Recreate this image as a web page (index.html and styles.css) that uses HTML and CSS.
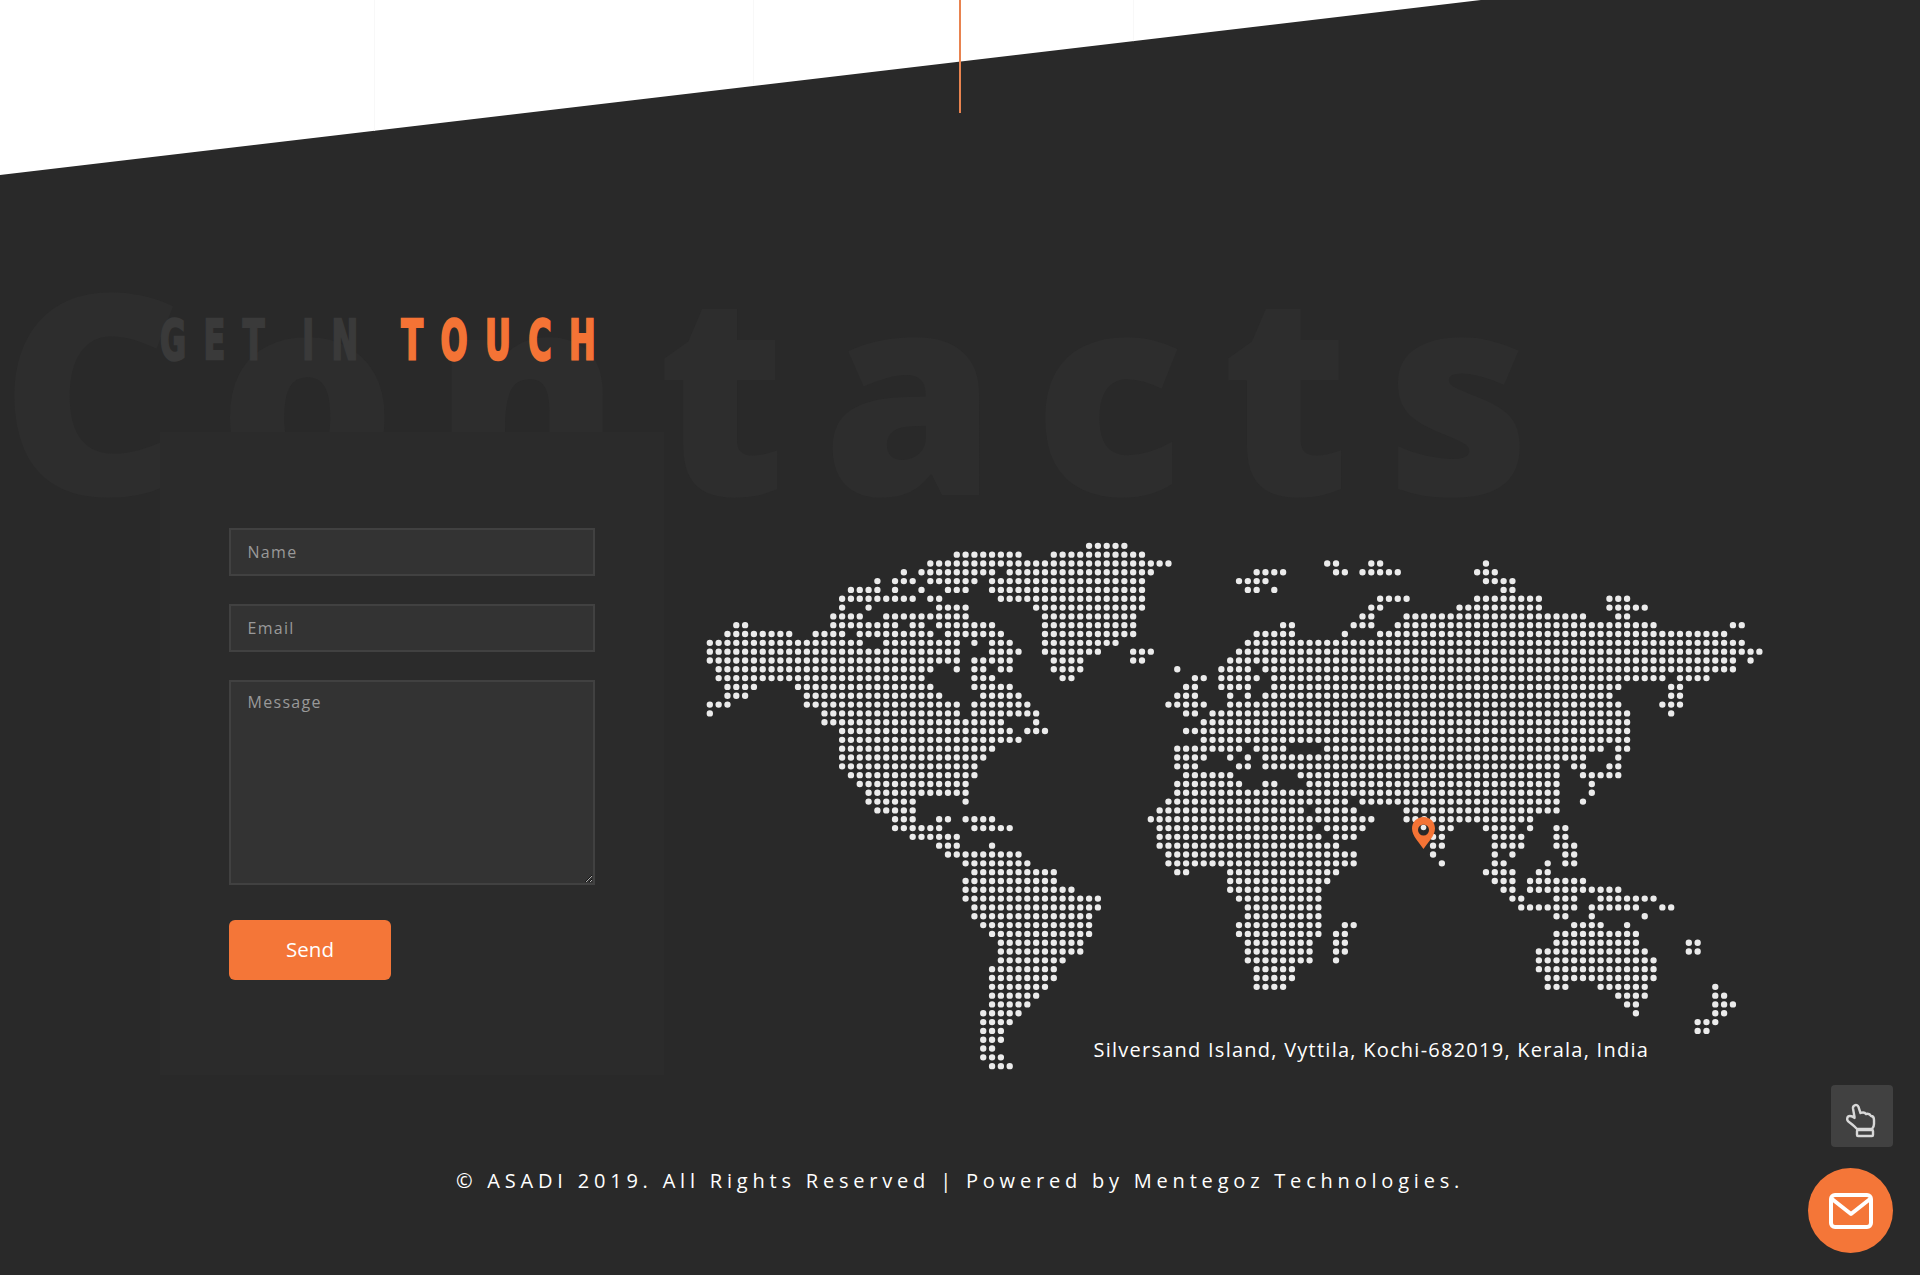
FILE: index.html
```html
<!DOCTYPE html>
<html lang="en">
<head>
<meta charset="utf-8">
<title>Contacts</title>
<link rel="stylesheet" href="styles.css">
</head>
<body>
<div class="page">
  <header class="hero">
    <div class="guides"><span></span><span></span><span></span><span></span></div>
  </header>
  <span class="drop-line"></span>
  <section class="contact">
    <span class="ghost-word">Contacts</span>
    <h2 class="title"><span class="title-inner">GET IN <em>TOUCH</em></span></h2>
    <div class="contact-row">
      <form class="form-card">
        <input class="field" type="text" placeholder="Name">
        <input class="field" type="text" placeholder="Email">
        <textarea class="field field-area" placeholder="Message"></textarea>
        <button class="send" type="button">Send</button>
      </form>
      <div class="map">
        <svg class="map-svg" viewBox="-1 -1 122 62" width="1076.04" height="546.84" aria-hidden="true">
          <path class="dots" d="M43 0h4.5
M28 1h7.5M39 1h10.5
M25 2h27.5M70 2h1.5M75 2h1.5M88 2h.5
M22 3h.5M24 3h8.5M34 3h16.5M62 3h3.5M71 3h1.5M74 3h4.5M87 3h2.5
M19 4h.5M21 4h2.5M25 4h5.5M32 4h17.5M60 4h3.5M88 4h3.5
M16 5h3.5M21 5h.5M24 5h.5M27 5h2.5M32 5h17.5M61 5h1.5M64 5h.5M90 5h1.5
M15 6h8.5M25 6h1.5M33 6h16.5M76 6h3.5M87 6h7.5M102 6h2.5
M15 7h.5M18 7h.5M26 7h3.5M37 7h12.5M75 7h1.5M85 7h9.5M102 7h4.5
M14 8h3.5M20 8h9.5M38 8h10.5M74 8h1.5M79 8h20.5M103 8h1.5
M3 9h1.5M14 9h7.5M23 9h1.5M26 9h6.5M38 9h10.5M65 9h1.5M73 9h2.5M78 9h29.5M116 9h1.5
M2 10h7.5M12 10h3.5M17 10h8.5M27 10h6.5M38 10h10.5M62 10h4.5M72 10h.5M76 10h39.5
M0 11h17.5M20 11h8.5M30 11h.5M32 11h2.5M38 11h8.5M61 11h56.5
M0 12h28.5M32 12h3.5M38 12h6.5M48 12h2.5M60 12h59.5
M0 13h28.5M30 13h4.5M39 13h3.5M48 13h1.5M59 13h57.5M118 13h.5
M1 14h24.5M28 14h.5M30 14h1.5M33 14h1.5M39 14h3.5M53 14h.5M58 14h3.5M63 14h53.5
M1 15h23.5M30 15h2.5M40 15h1.5M55 15h1.5M58 15h4.5M64 15h44.5M110 15h3.5
M2 16h3.5M10 16h15.5M30 16h4.5M54 16h1.5M58 16h3.5M64 16h39.5M109 16h1.5
M2 17h2.5M11 17h15.5M31 17h4.5M53 17h2.5M59 17h.5M61 17h.5M63 17h39.5M109 17h1.5
M0 18h2.5M11 18h17.5M30 18h6.5M52 18h4.5M59 18h44.5M108 18h2.5
M0 19h.5M13 19h15.5M30 19h7.5M54 19h1.5M57 19h47.5M109 19h.5
M13 20h20.5M37 20h.5M56 20h48.5
M15 21h19.5M36 21h2.5M54 21h50.5
M15 22h20.5M56 22h48.5
M15 23h17.5M53 23h7.5M62 23h3.5M70 23h31.5M103 23h1.5
M15 24h16.5M53 24h3.5M59 24h.5M61 24h.5M63 24h36.5M103 24h.5
M15 25h15.5M53 25h2.5M60 25h1.5M63 25h33.5M98 25h1.5M102 25h1.5
M16 26h14.5M54 26h5.5M67 26h29.5M99 26h4.5
M17 27h12.5M53 27h7.5M63 27h1.5M68 27h28.5M100 27h.5
M18 28h11.5M53 28h43.5M100 28h.5
M18 29h5.5M29 29h.5M52 29h20.5M74 29h22.5M99 29h.5
M19 30h4.5M51 30h16.5M69 30h4.5M79 30h17.5
M21 31h2.5M26 31h1.5M29 31h3.5M50 31h25.5M79 31h14.5
M21 32h5.5M30 32h4.5M51 32h17.5M70 32h4.5M83 32h1.5M88 32h3.5M93 32h.5M96 32h1.5
M23 33h5.5M51 33h18.5M71 33h2.5M82 33h1.5M89 33h3.5M96 33h1.5
M26 34h2.5M32 34h.5M51 34h20.5M82 34h1.5M89 34h3.5M96 34h2.5
M27 35h8.5M52 35h21.5M82 35h.5M89 35h.5M91 35h.5M97 35h1.5
M29 36h7.5M52 36h21.5M83 36h.5M89 36h1.5M95 36h.5M97 36h1.5
M30 37h9.5M53 37h1.5M59 37h12.5M88 37h3.5M94 37h1.5
M29 38h10.5M59 38h11.5M89 38h2.5M93 38h6.5
M29 39h12.5M59 39h10.5M90 39h1.5M93 39h10.5
M29 40h15.5M60 40h9.5M91 40h1.5M96 40h2.5M101 40h6.5
M30 41h14.5M61 41h8.5M92 41h6.5M100 41h5.5M108 41h1.5
M30 42h13.5M61 42h8.5M96 42h1.5M100 42h.5M106 42h.5
M31 43h12.5M60 43h9.5M72 43h1.5M98 43h3.5M104 43h.5
M32 44h11.5M60 44h9.5M71 44h1.5M96 44h9.5
M33 45h9.5M61 45h7.5M71 45h1.5M96 45h9.5M111 45h1.5
M33 46h9.5M61 46h7.5M71 46h1.5M94 46h12.5M111 46h1.5
M33 47h7.5M61 47h7.5M71 47h.5M94 47h13.5
M32 48h7.5M62 48h4.5M94 48h13.5
M32 49h7.5M62 49h4.5M95 49h12.5
M32 50h6.5M62 50h3.5M95 50h2.5M101 50h5.5M114 50h.5
M32 51h5.5M103 51h3.5M114 51h1.5
M32 52h4.5M104 52h1.5M114 52h2.5
M31 53h4.5M105 53h.5M114 53h1.5
M31 54h3.5M112 54h2.5
M31 55h2.5M112 55h1.5
M31 56h2.5
M31 57h1.5
M31 58h2.5
M32 59h2.5"/>
        </svg>
        <svg class="pin" viewBox="0 0 23 32" width="23" height="32" aria-hidden="true">
          <path class="pin-body" d="M11.5 0C5 0 0 5 0 11.500 0 19 7.500 26 11.500 32c4-6 11.500-13 11.500-20.500C23 5 18 0 11.500 0z"/>
          <circle class="pin-hole" cx="11.5" cy="13" r="5.500"/>
          <circle class="pin-dot" cx="11.5" cy="10.500" r="2.800"/>
        </svg>
        <p class="address">Silversand Island, Vyttila, Kochi-682019, Kerala, India</p>
      </div>
    </div>
  </section>
  <footer class="footer">© ASADI 2019. All Rights Reserved | Powered by Mentegoz Technologies.</footer>
  <div class="floats">
    <a class="float-square" href="#" aria-label="Pointer">
      <svg viewBox="0 0 31 35" width="31" height="35" aria-hidden="true">
        <path class="hand" d="M9.500 14 8 5.500C7.500 2 12.500.5 13.500 4l2 6c2.500-1 4.500-.5 5.500 1 2-.5 4 0 5 2 2 0 3 2 3 4v4c0 2-1 4-2 5H12c-2-2-5-5-8-7-3-2-2-6 1-6 2 0 3.500 1 4.500 2z"/>
        <rect class="hand" x="12" y="27" width="16" height="6" rx="1"/>
      </svg>
    </a>
    <a class="float-mail" href="#" aria-label="Mail">
      <svg viewBox="0 0 44 36" width="44" height="36" aria-hidden="true">
        <rect class="mail" x="2" y="2" width="40" height="32" rx="4"/>
        <path class="mail" d="M3 6l19 15L41 6"/>
      </svg>
    </a>
  </div>
</div>
</body>
</html>
```
FILE: styles.css
```css
* { box-sizing: border-box; }
html, body { margin: 0; padding: 0; }
body { font-family: "Open Sans", sans-serif; background: #292929; color: #fff; }

.page { position: relative; height: 1275px; overflow: hidden; background: #292929; }

.hero {
  height: 175px;
  background: #fff;
  clip-path: polygon(0 0, 1481px 0, 0 100%);
}
.guides { display: grid; grid-template-columns: 375px 379px 380px 1fr; height: 100%; }
.guides span { border-right: 1px solid #f8f8f8; }
.guides span:last-child { border-right: 0; }

.drop-line { position: absolute; left: 959px; top: 0; width: 2px; height: 113px; background: #e8834f; }

.contact { position: relative; }
.ghost-word {
  position: absolute;
  left: 0;
  top: 32px;
  font-size: 280px;
  line-height: 360px;
  font-weight: 800;
  letter-spacing: 36.5px;
  color: #2d2d2d;
  white-space: nowrap;
}
.title {
  position: relative;
  margin: 0;
  padding: 131px 0 0 160px;
  height: 257px;
  font-family: "DejaVu Sans", sans-serif;
  font-size: 55px;
  line-height: 68px;
  font-weight: 700;
  letter-spacing: 30px;
  word-spacing: -14px;
  color: #3a3a3a;
  white-space: nowrap;
}
.title-inner {
  display: inline-block;
  transform: scaleX(.58);
  transform-origin: left center;
  -webkit-text-stroke: 2.5px currentColor;
}
.title em { font-style: normal; color: #f47335; margin-left: 9px; }

.contact-row { position: relative; display: flex; align-items: flex-start; padding-left: 160px; }

.form-card {
  width: 504px;
  height: 643px;
  flex: none;
  padding: 96px 69px 0;
  display: flex;
  flex-direction: column;
  background: #2b2b2b;
}
.field {
  display: block;
  width: 366px;
  height: 48px;
  margin: 0 0 28px;
  padding: 0 16.5px;
  background: #333;
  border: 2px solid #414141;
  border-radius: 0;
  color: #ddd;
  font-family: "Open Sans", sans-serif;
  font-size: 16px;
  letter-spacing: 1.3px;
  outline: 0;
}
.field::placeholder { color: #999; opacity: 1; }
.field-area { height: 205px; padding-top: 9px; margin-bottom: 35px; }

.send {
  width: 162px;
  height: 60px;
  padding: 0 0 2px;
  border: 0;
  border-radius: 6px;
  background: #f47638;
  color: #fff;
  font-family: "Open Sans", sans-serif;
  font-size: 20.5px;
  font-weight: 500;
  cursor: pointer;
}

.map { position: relative; flex: none; width: 1076.040px; height: 546.840px; margin: 105.400px 0 0 37.180px; }
.map-svg { display: block; }
.dots {
  fill: none;
  stroke: #ebebeb;
  stroke-width: .72;
  stroke-linecap: round;
  stroke-dasharray: 0 1;
}
.pin { position: absolute; left: 711.3px; top: 279.6px; }
.pin-body { fill: #f47335; }
.pin-hole { fill: #292929; }
.pin-dot { fill: #ebebeb; }
.address {
  position: absolute;
  left: 392.300px;
  top: 500px;
  margin: 0;
  font-size: 20px;
  line-height: 26px;
  letter-spacing: 1.25px;
  white-space: nowrap;
}

.footer {
  padding-top: 84px;
  text-align: center;
  font-size: 20px;
  line-height: 26px;
  letter-spacing: 4.8px;
}

.floats {
  position: absolute;
  right: 27px;
  bottom: 22px;
  display: flex;
  flex-direction: column;
  align-items: flex-end;
  gap: 21px;
}
.float-square {
  width: 62px;
  height: 62px;
  padding: 9px 4px 0 0;
  border-radius: 4px;
  background: #414141;
  display: flex;
  align-items: center;
  justify-content: center;
}
.float-mail {
  width: 85px;
  height: 85px;
  border-radius: 50%;
  background: #f47638;
  display: flex;
  align-items: center;
  justify-content: center;
}
.hand { fill: none; stroke: #d8d8d8; stroke-width: 2.400; stroke-linejoin: round; }
.mail { fill: none; stroke: #fff; stroke-width: 4; stroke-linejoin: round; stroke-linecap: round; }
```
